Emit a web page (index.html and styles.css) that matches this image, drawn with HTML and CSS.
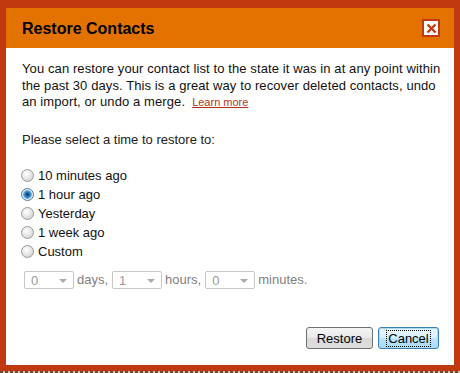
FILE: index.html
```html
<!DOCTYPE html>
<html lang="en">
<head>
    <meta charset="UTF-8">
    <title>Restore Contacts</title>
    <link rel="stylesheet" href="styles.css">
</head>
<body>
    <div class="dialog">
        <div class="dialog-header">
            <span class="dialog-title">Restore Contacts</span>
            <button class="close-btn" title="Close">
                <svg width="11" height="11" viewBox="0 0 11 11">
                    <path d="M1.5 1.5 L9.5 9.5 M9.5 1.5 L1.5 9.5" stroke="#c1390f" stroke-width="2.4" fill="none"/>
                </svg>
            </button>
        </div>
        <div class="dialog-body">
            <p class="intro">You can restore your contact list to the state it was in at any point within<br>the past 30 days. This is a great way to recover deleted contacts, undo<br>an import, or undo a merge.<a href="#" class="learn">Learn more</a></p>

            <p class="prompt">Please select a time to restore to:</p>

            <div class="options">
                <label class="option"><input type="radio" name="t"> 10 minutes ago</label>
                <label class="option"><input type="radio" name="t" checked> 1 hour ago</label>
                <label class="option"><input type="radio" name="t"> Yesterday</label>
                <label class="option"><input type="radio" name="t"> 1 week ago</label>
                <label class="option"><input type="radio" name="t"> Custom</label>
            </div>

            <div class="custom">
                <span class="fake-select">0<span class="arrow"></span></span>
                <span class="unit">days,</span>
                <span class="fake-select">1<span class="arrow"></span></span>
                <span class="unit">hours,</span>
                <span class="fake-select">0<span class="arrow"></span></span>
                <span class="unit">minutes.</span>
            </div>

            <div class="actions">
                <button class="btn btn-restore">Restore</button>
                <button class="btn btn-focus"><span class="focus-ring">Cancel</span></button>
            </div>
        </div>
    </div>
    <div class="backdrop"></div>
</body>
</html>
```

FILE: styles.css
```css
body {
    margin: 0;
    padding: 0;
    width: 460px;
    height: 373px;
    overflow: hidden;
    background: #5a3a28;
    font-family: Arial, "Liberation Sans", sans-serif;
    color: #000;
}

.dialog {
    box-sizing: border-box;
    height: 371px;
    border: 6px solid #c1390f;
    border-top: 8px solid #c1390f;
    box-shadow: inset 0 1px 0 #8a5a3a;
    display: flex;
    flex-direction: column;
}

.dialog-header {
    height: 40px;
    background: #e47200;
    display: flex;
    align-items: center;
    justify-content: space-between;
    padding: 0 14px 0 16px;
}

.dialog-title {
    font-size: 16px;
    font-weight: bold;
    margin-top: 1px;
}

.close-btn {
    width: 18px;
    height: 18px;
    padding: 0;
    border: 2px solid #c1390f;
    background: #fff;
    display: flex;
    align-items: center;
    justify-content: center;
    cursor: pointer;
}

.dialog-body {
    flex: 1;
    background: #fff;
    padding: 13px 16px 0 16px;
    font-size: 13px;
    display: flex;
    flex-direction: column;
}

.intro {
    margin: 0 -8px 0 0;
    line-height: 16.5px;
    color: #111;
    letter-spacing: 0.1px;
    white-space: nowrap;
}

.learn {
    font-size: 11px;
    letter-spacing: 0;
    color: #b5321a;
    margin-left: 7px;
}

.prompt {
    margin: 21px 0 0 0;
    color: #222;
}

.options {
    margin-top: 19px;
    display: flex;
    flex-direction: column;
}

.option {
    height: 19px;
    display: flex;
    align-items: center;
    color: #111;
}

.option input {
    appearance: none;
    box-sizing: border-box;
    width: 13px;
    height: 13px;
    margin: 0 4px 0 -1px;
    border: 1px solid #9a9a9a;
    border-radius: 50%;
    background: radial-gradient(circle at 40% 35%, #ffffff 0, #e8e8e8 45%, #c8c8c8 100%);
}

.option input:checked {
    border-color: #5a7a9a;
    background: radial-gradient(circle at 50% 50%, #0b2e5a 0, #1f6fb0 2px, #5fb0e6 4px, #dfe9f2 4.6px, #f4f4f4 100%);
}

.custom {
    margin-top: 10px;
    margin-left: 2px;
    display: flex;
    align-items: center;
    gap: 3px;
    color: #808080;
}

.fake-select {
    box-sizing: border-box;
    position: relative;
    width: 50px;
    height: 18px;
    border: 1px solid #c6c6c6;
    border-radius: 2px;
    padding: 1px 0 0 6px;
    color: #999;
    font-size: 13px;
}

.arrow {
    position: absolute;
    right: 6px;
    top: 7px;
    border-left: 4px solid transparent;
    border-right: 4px solid transparent;
    border-top: 4px solid #aaa;
}

.unit {
    margin-right: 1px;
}

.actions {
    margin-top: auto;
    margin-bottom: 16px;
    margin-right: -1px;
    display: flex;
    justify-content: flex-end;
    gap: 5px;
}

.btn {
    box-sizing: border-box;
    height: 22px;
    padding: 0;
    font-family: Arial, "Liberation Sans", sans-serif;
    font-size: 13px;
    color: #000;
    border: 1px solid #707070;
    border-radius: 3px;
    background: linear-gradient(#f4f4f4, #e9e9e9 50%, #dadada 51%, #dedede);
}

.btn-restore {
    width: 67px;
}

.btn-focus {
    width: 61px;
    border-color: #3c7fb1;
    box-shadow: inset 0 0 0 1px #a8dcf7;
    background: linear-gradient(#eaf6fd, #d9f0fc 50%, #bee6fd 51%, #a7d9f5);
}

.focus-ring {
    outline: 1px dotted #000;
    padding: 0 1px;
}

.backdrop {
    height: 2px;
    background: repeating-linear-gradient(90deg, #6b4a36 0 3px, #d9c3a8 3px 5px);
}
```
